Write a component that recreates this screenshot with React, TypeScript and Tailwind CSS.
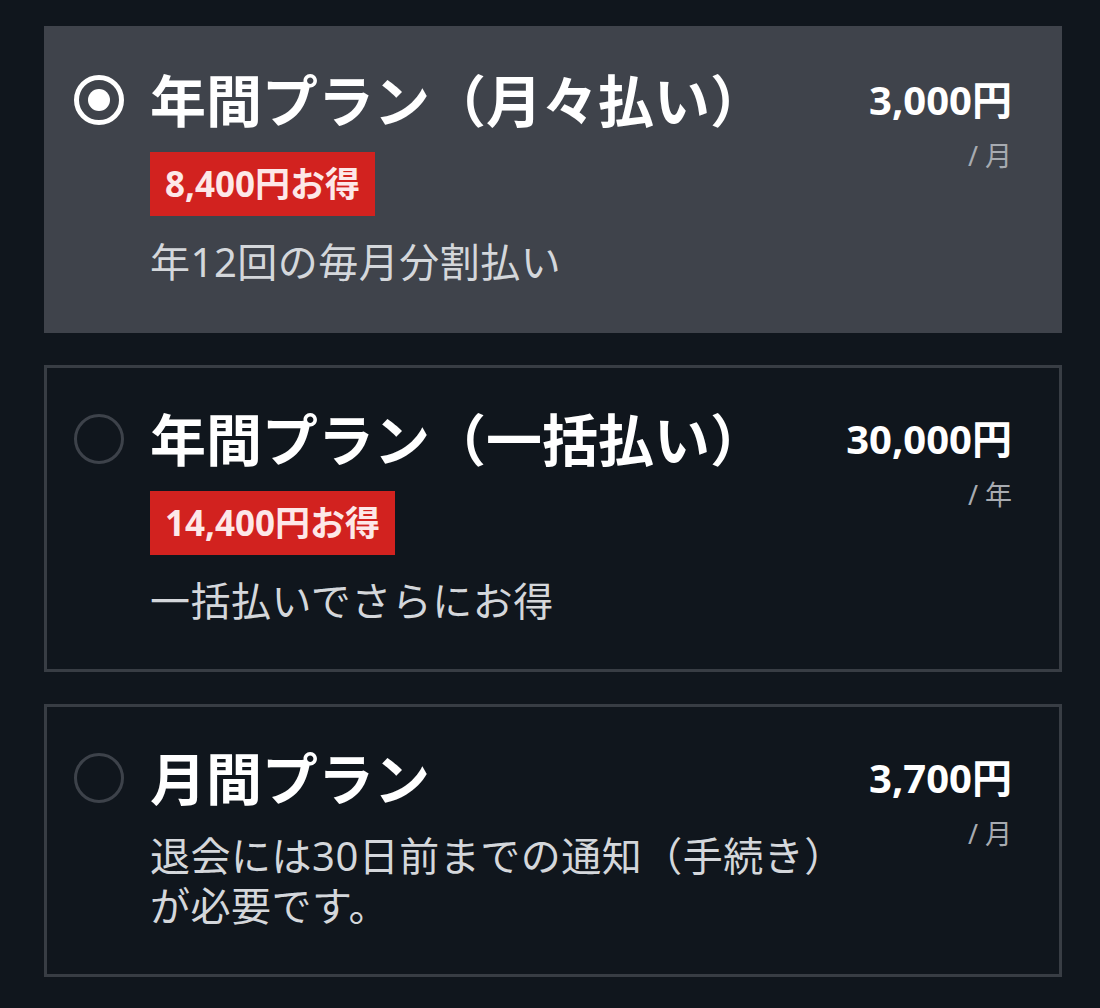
import { useState } from "react";

type Plan = {
  id: string;
  title: string;
  badge?: string;
  desc: string[];
  price: string;
  unit: string;
};

const plans: Plan[] = [
  {
    id: "annual-monthly",
    title: "年間プラン（月々払い）",
    badge: "8,400円お得",
    desc: ["年12回の毎月分割払い"],
    price: "3,000円",
    unit: "/ 月",
  },
  {
    id: "annual-lump",
    title: "年間プラン（一括払い）",
    badge: "14,400円お得",
    desc: ["一括払いでさらにお得"],
    price: "30,000円",
    unit: "/ 年",
  },
  {
    id: "monthly",
    title: "月間プラン",
    desc: ["退会には30日前までの通知（手続き）", "が必要です。"],
    price: "3,700円",
    unit: "/ 月",
  },
];

export default function App() {
  const [selected, setSelected] = useState("annual-monthly");

  return (
    <div
      className="min-h-screen bg-[#10161d] pt-[26px] pl-[44px]"
      style={{ fontFamily: '"Noto Sans", "Noto Sans CJK JP", sans-serif' }}
    >
      <div className="flex w-[1018px] flex-col gap-[32px]">
        {plans.map((plan) => {
          const active = plan.id === selected;
          return (
            <button
              key={plan.id}
              type="button"
              onClick={() => setSelected(plan.id)}
              className={`flex items-start border-[3px] pt-[39px] pb-[43px] pl-[27px] pr-[47px] text-left ${
                active
                  ? "border-[#3f434b] bg-[#3f434b]"
                  : "border-[#383d44] bg-[#10161d]"
              }`}
            >
              {/* radio */}
              <div className="flex h-[64px] shrink-0 items-center">
                <span
                  className={`flex h-[50px] w-[50px] items-center justify-center rounded-full ${
                    active
                      ? "border-[5px] border-white"
                      : "border-[3px] border-[#3d424a]"
                  }`}
                >
                  {active && (
                    <span className="h-[22px] w-[22px] rounded-full bg-white" />
                  )}
                </span>
              </div>

              <div className="ml-[26px] flex min-w-0 flex-1 flex-col">
                <div className="text-[56px] leading-[64px] font-bold text-white">
                  {plan.title}
                </div>
                {plan.badge && (
                  <div className="mt-[20px] self-start bg-[#d2221f] px-[15px] text-[35px] leading-[64px] font-bold text-[#fde8e8]">
                    {plan.badge}
                  </div>
                )}
                <div className="mt-[21px] text-[40px] leading-[50px] tracking-[0.5px] text-[#d4d7db]">
                  {plan.desc.map((line) => (
                    <div key={line}>{line}</div>
                  ))}
                </div>
              </div>

              <div className="flex shrink-0 flex-col items-end pt-[4px]">
                <div className="text-[40px] leading-[56px] font-bold text-white">
                  {plan.price}
                </div>
                <div className="mt-[11px] text-[27px] leading-[34px] text-[#a7abb1]">
                  {plan.unit}
                </div>
              </div>
            </button>
          );
        })}
      </div>
    </div>
  );
}
